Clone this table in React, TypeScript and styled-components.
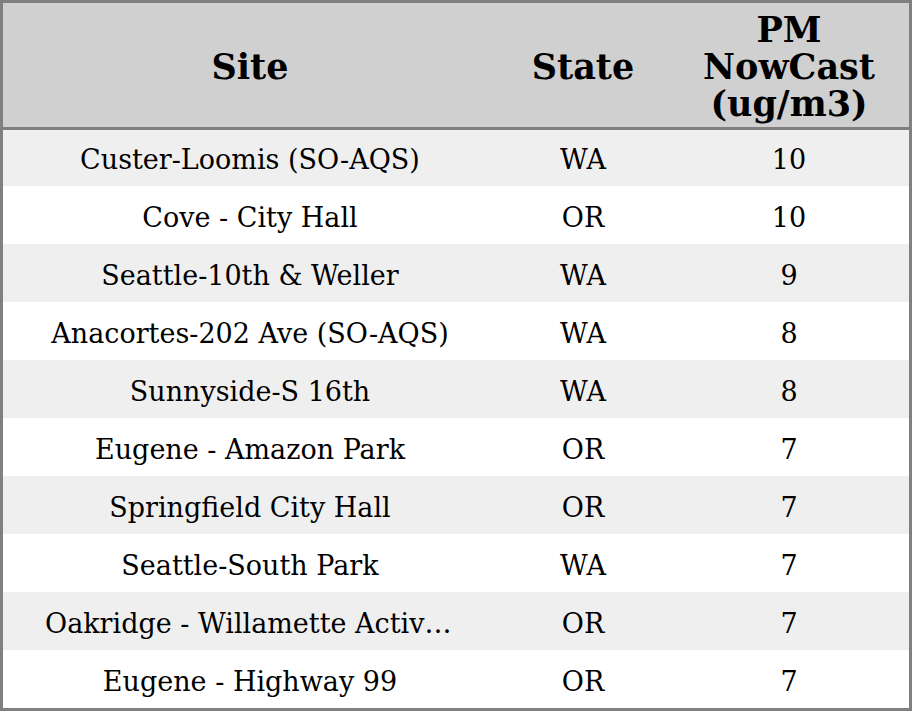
import React from "react";
import styled, { createGlobalStyle } from "styled-components";

const GlobalStyle = createGlobalStyle`
  html, body {
    margin: 0;
    padding: 0;
    background: #ffffff;
  }
  body {
    font-family: "DejaVu Serif", serif;
  }
`;

const Frame = styled.div`
  width: 912px;
  height: 711px;
  box-sizing: border-box;
  border: 3px solid #808080;
  overflow: hidden;
`;

const Table = styled.table`
  width: 100%;
  height: 100%;
  border-collapse: collapse;
  table-layout: fixed;
`;

const HeadRow = styled.tr`
  height: 125px;
  background-color: #d0d0d0;
  border-bottom: 3px solid #808080;
`;

const HeadCell = styled.th`
  font-size: 35px;
  font-weight: bold;
  line-height: 37px;
  color: #000;
  text-align: center;
  padding: 3px 4px 0;
`;

const Row = styled.tr<{ $shade: boolean }>`
  height: 57.7px;
  background-color: ${(props) => (props.$shade ? "#efefef" : "#ffffff")};
`;

const Cell = styled.td<{ $wide?: boolean }>`
  font-size: 27px;
  color: #000;
  text-align: center;
  padding: 4px ${(props) => (props.$wide ? "42px" : "4px")} 0;
  white-space: nowrap;
  overflow: hidden;
  text-overflow: ellipsis;
`;

interface ISite {
  site: string;
  state: string;
  pm: number;
}

const sites: ISite[] = [
  { site: "Custer-Loomis (SO-AQS)", state: "WA", pm: 10 },
  { site: "Cove - City Hall", state: "OR", pm: 10 },
  { site: "Seattle-10th & Weller", state: "WA", pm: 9 },
  { site: "Anacortes-202 Ave (SO-AQS)", state: "WA", pm: 8 },
  { site: "Sunnyside-S 16th", state: "WA", pm: 8 },
  { site: "Eugene - Amazon Park", state: "OR", pm: 7 },
  { site: "Springfield City Hall", state: "OR", pm: 7 },
  { site: "Seattle-South Park", state: "WA", pm: 7 },
  { site: "Oakridge - Willamette Activity Center", state: "OR", pm: 7 },
  { site: "Eugene - Highway 99", state: "OR", pm: 7 },
];

const App = () => {
  return (
    <>
      <GlobalStyle />
      <Frame>
        <Table>
          <colgroup>
            <col style={{ width: "494px" }} />
            <col style={{ width: "172px" }} />
            <col style={{ width: "240px" }} />
          </colgroup>
          <thead>
            <HeadRow>
              <HeadCell>Site</HeadCell>
              <HeadCell>State</HeadCell>
              <HeadCell>
                PM
                <br />
                NowCast
                <br />
                (ug/m3)
              </HeadCell>
            </HeadRow>
          </thead>
          <tbody>
            {sites.map((s, i) => (
              <Row key={s.site} $shade={i % 2 === 0}>
                <Cell $wide>{s.site}</Cell>
                <Cell>{s.state}</Cell>
                <Cell>{s.pm}</Cell>
              </Row>
            ))}
          </tbody>
        </Table>
      </Frame>
    </>
  );
};

export default App;
